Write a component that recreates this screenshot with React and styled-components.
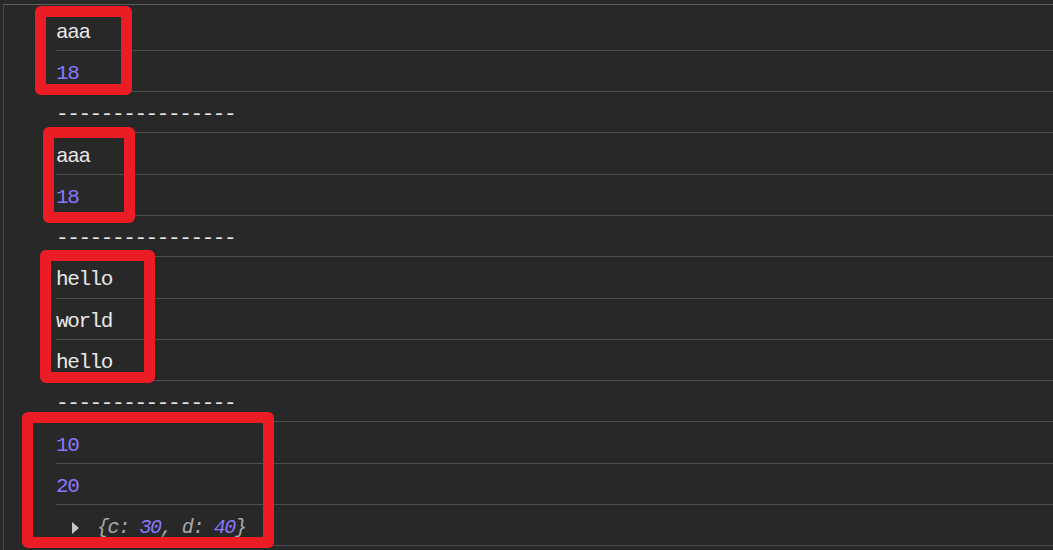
import React from 'react'
import styled, { createGlobalStyle } from 'styled-components'

const GlobalStyle = createGlobalStyle`
  html, body {
    margin: 0;
    padding: 0;
    background: #282828;
  }
  body {
    width: 1053px;
    height: 550px;
    overflow: hidden;
  }
`

const Frame = styled.div`
  position: relative;
  width: 1053px;
  height: 550px;
  padding-top: 4px;
  box-sizing: border-box;
  background: #282828;
  overflow: hidden;
`

const Panel = styled.div`
  margin-left: 3px;
  height: 100%;
  border-top: 1px solid #5c5c5c;
  border-left: 1px solid #4a4a4a;
  padding-top: 4.5px;
  box-sizing: border-box;
`

const List = styled.div`
  margin-left: 52px;
`

const Row = styled.div`
  height: 41.3px;
  box-sizing: border-box;
  padding-top: 5px;
  display: flex;
  align-items: center;
  border-bottom: 1px solid #4e4e4e;
  font-family: "Liberation Mono", "DejaVu Sans Mono", monospace;
  font-size: 21px;
  letter-spacing: -1.4px;
  color: ${p => (p.$num ? '#8878ff' : '#e8e8e8')};
  white-space: pre;
`

const Caret = styled.span`
  width: 0;
  height: 0;
  margin-left: 16px;
  margin-right: 18px;
  border-top: 6px solid transparent;
  border-bottom: 6px solid transparent;
  border-left: 7px solid #c4c4c4;
`

const Preview = styled.span`
  font-style: italic;
  font-size: 20px;
  letter-spacing: -1.4px;
  color: #a9a9a9;
`

const Num = styled.span`
  color: #8878ff;
`

const Mark = styled.div`
  position: absolute;
  border: 11px solid #ec1c24;
  border-radius: 6px;
  box-sizing: border-box;
`

const marks = [
  { left: 35, top: 6, width: 97, height: 89 },
  { left: 43, top: 127, width: 92, height: 96 },
  { left: 40, top: 250, width: 115, height: 133 },
  { left: 22, top: 412, width: 252, height: 136 },
]

const logs = [
  { text: 'aaa' },
  { text: '18', num: true },
  { text: '----------------' },
  { text: 'aaa' },
  { text: '18', num: true },
  { text: '----------------' },
  { text: 'hello' },
  { text: 'world' },
  { text: 'hello' },
  { text: '----------------' },
  { text: '10', num: true },
  { text: '20', num: true },
]

export default function App() {
  return (
    <>
      <GlobalStyle />
      <Frame>
        <Panel>
          <List>
            {logs.map((l, i) => (
              <Row key={i} $num={l.num}>{l.text}</Row>
            ))}
            <Row>
              <Caret />
              <Preview>
                {'{c: '}<Num>30</Num>{', d: '}<Num>40</Num>{'}'}
              </Preview>
            </Row>
          </List>
        </Panel>
        {marks.map((m, i) => (
          <Mark key={i} style={m} />
        ))}
      </Frame>
    </>
  )
}
